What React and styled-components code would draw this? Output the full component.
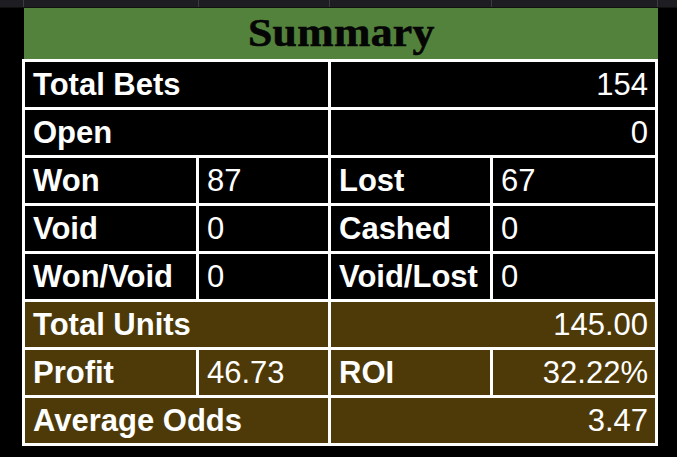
import React from "react";
import styled, { createGlobalStyle } from "styled-components";

const Global = createGlobalStyle`
  html, body { margin: 0; padding: 0; background: #000; }
  body { width: 677px; height: 457px; overflow: hidden; }
`;

const Page = styled.div`
  width: 677px;
  height: 457px;
  background: #000;
  display: flex;
  flex-direction: column;
`;

const Strip = styled.div`
  display: grid;
  grid-template-columns: 24px 175px 131px 162px 166px 1fr;
  height: 7px;
  background: #1d1d22;
  border-bottom: 1px solid #111;
`;

const StripCell = styled.div`
  border-right: 1px solid #3b3b40;
  &:last-child { border-right: none; }
`;

const Sheet = styled.div`
  margin-left: 22px;
  width: 636px;
  display: flex;
  flex-direction: column;
`;

const Title = styled.div`
  margin-left: 2px;
  height: 51px;
  background: #53823d;
  display: flex;
  align-items: center;
  justify-content: center;
  padding-bottom: 3px;
  box-sizing: border-box;
`;

const TitleText = styled.span`
  display: inline-block;
  font-family: "Liberation Serif", "Times New Roman", serif;
  font-weight: 700;
  font-size: 39px;
  letter-spacing: 0.3px;
  color: #050505;
  -webkit-text-stroke: 0.6px #050505;
  transform: scaleX(1.12);
`;

const Table = styled.div`
  display: grid;
  grid-template-columns: 171px 129px 159px 162px;
  grid-auto-rows: 45px;
  gap: 3px;
  padding: 3px;
  background: #fff;
`;

const Cell = styled.div`
  grid-column: span ${(p) => p.$span || 1};
  background: ${(p) => (p.$tone === "brown" ? "#4e3a08" : "#000")};
  color: #fff;
  font-family: "Liberation Sans", Arial, sans-serif;
  font-size: 31px;
  font-weight: ${(p) => (p.$bold ? 700 : 400)};
  display: flex;
  align-items: center;
  justify-content: ${(p) => (p.$right ? "flex-end" : "flex-start")};
  padding: 0 7px 0 8px;
  white-space: nowrap;
  overflow: hidden;
`;

const rows = [
  { tone: "black", cells: [["Total Bets", 2, true], ["154", 2, false, true]] },
  { tone: "black", cells: [["Open", 2, true], ["0", 2, false, true]] },
  { tone: "black", cells: [["Won", 1, true], ["87"], ["Lost", 1, true], ["67"]] },
  { tone: "black", cells: [["Void", 1, true], ["0"], ["Cashed", 1, true], ["0"]] },
  { tone: "black", cells: [["Won/Void", 1, true], ["0"], ["Void/Lost", 1, true], ["0"]] },
  { tone: "brown", cells: [["Total Units", 2, true], ["145.00", 2, false, true]] },
  { tone: "brown", cells: [["Profit", 1, true], ["46.73"], ["ROI", 1, true], ["32.22%", 1, false, true]] },
  { tone: "brown", cells: [["Average Odds", 2, true], ["3.47", 2, false, true]] },
];

export default function App() {
  return (
    <Page>
      <Global />
      <Strip>
        {Array.from({ length: 6 }).map((_, i) => (
          <StripCell key={i} />
        ))}
      </Strip>
      <Sheet>
        <Title>
          <TitleText>Summary</TitleText>
        </Title>
        <Table>
          {rows.map((r, ri) =>
            r.cells.map(([text, span, bold, right], ci) => (
              <Cell
                key={`${ri}-${ci}`}
                $span={span}
                $bold={bold}
                $right={right}
                $tone={r.tone}
              >
                {text}
              </Cell>
            ))
          )}
        </Table>
      </Sheet>
    </Page>
  );
}
